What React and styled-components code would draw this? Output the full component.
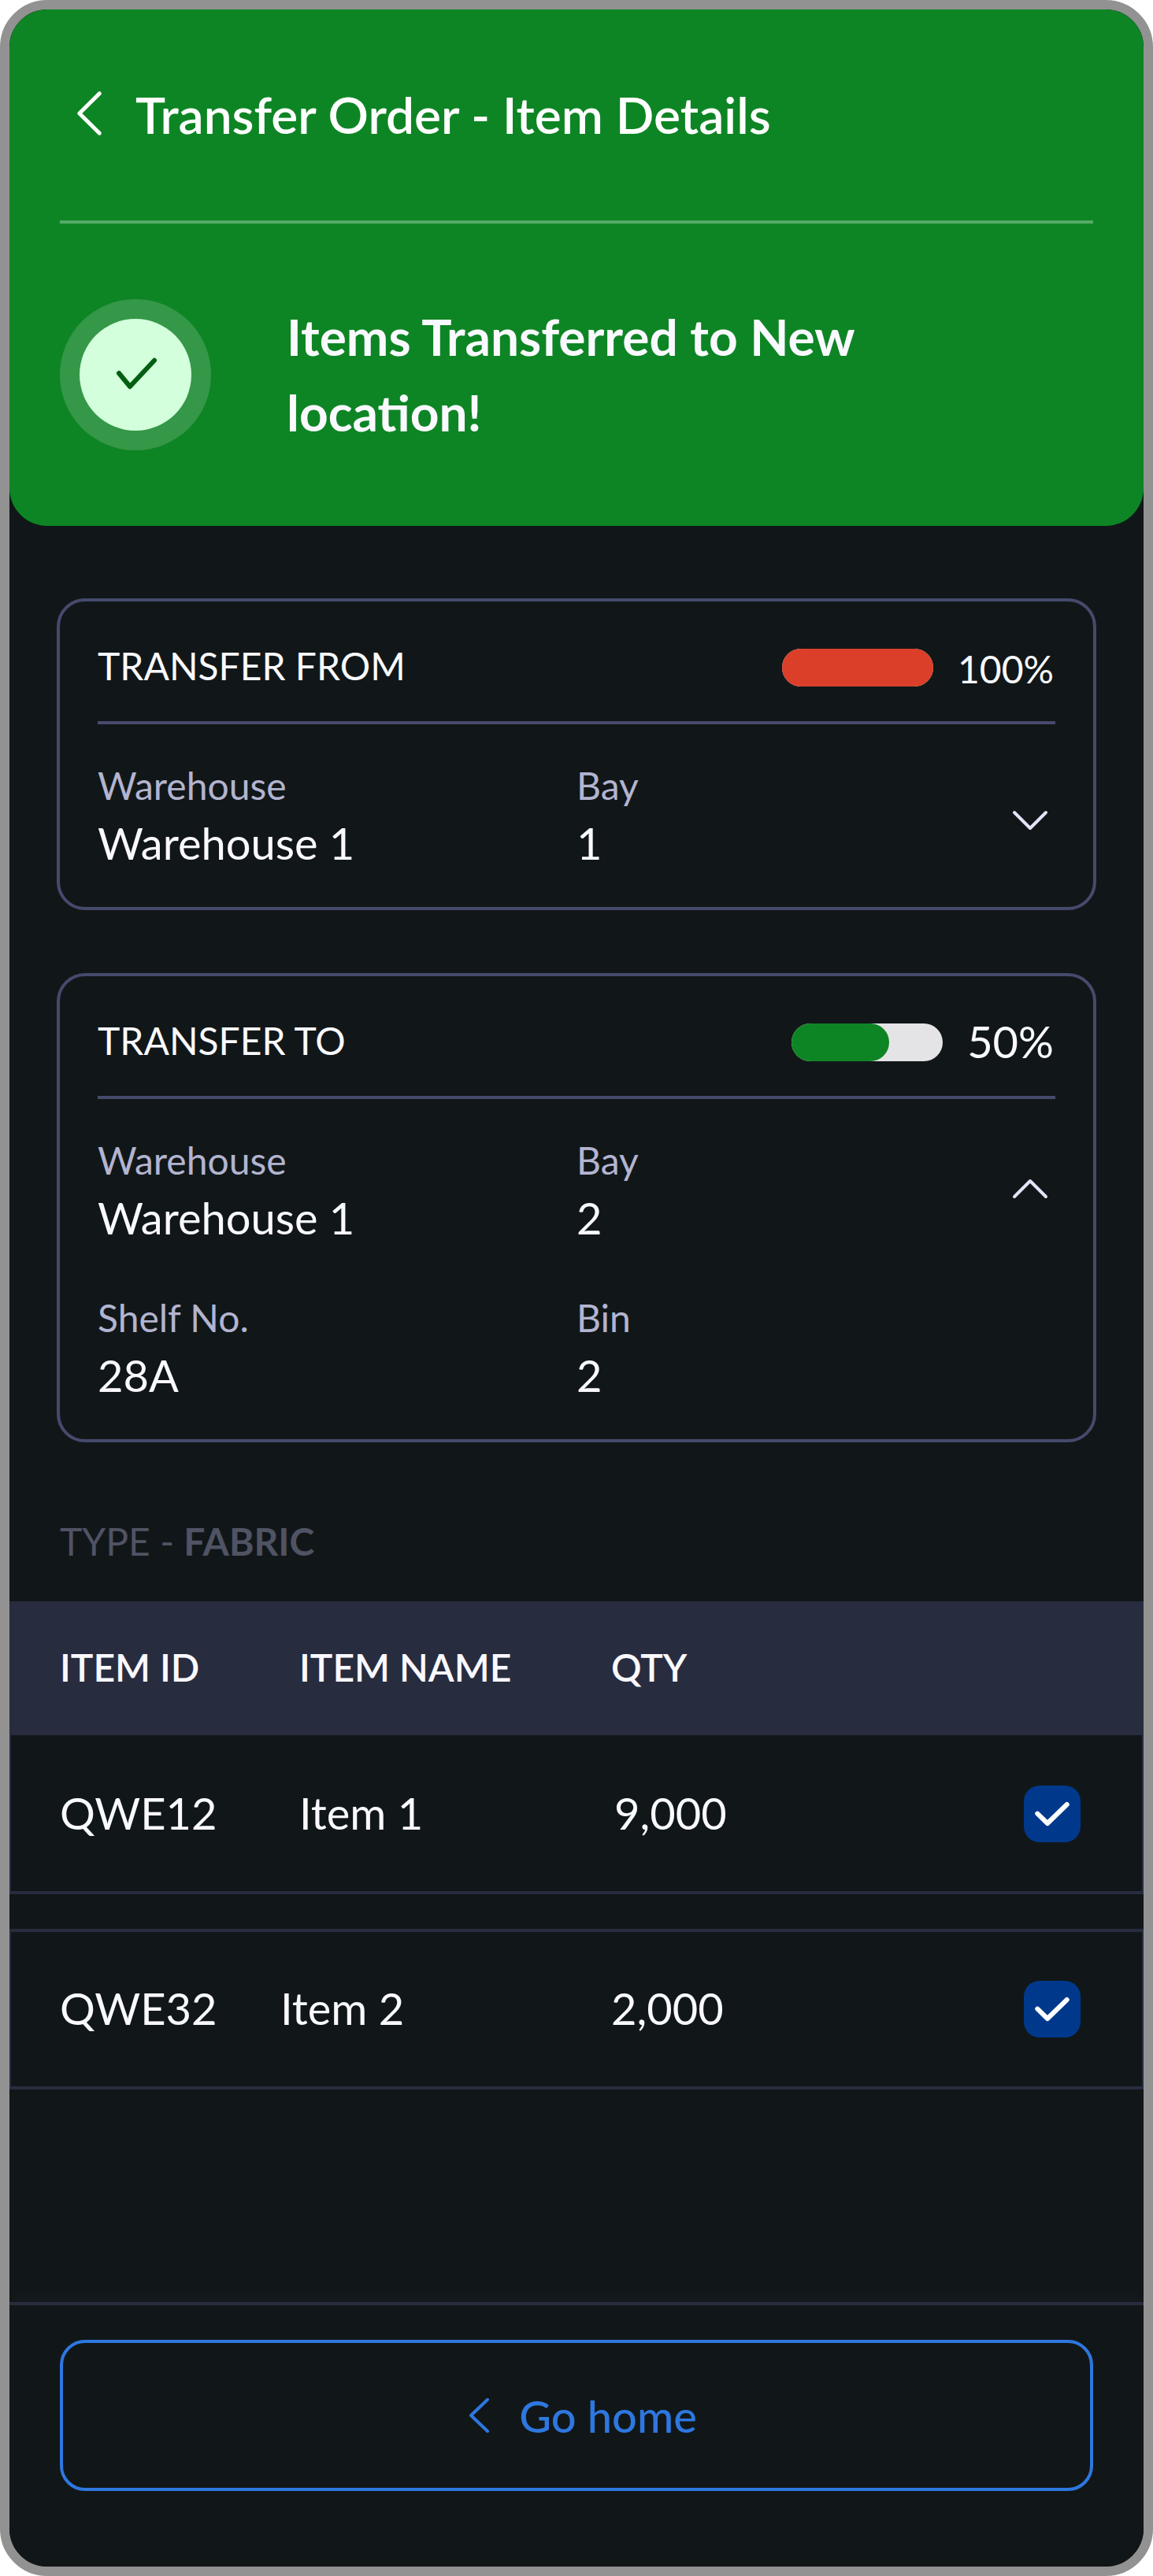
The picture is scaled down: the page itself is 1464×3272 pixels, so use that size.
import React from "react";
import styled, { createGlobalStyle } from "styled-components";

const GlobalStyle = createGlobalStyle`
    * {
        box-sizing: border-box;
    }
    body {
        margin: 0;
        background: #fff;
        font-family: 'Lato', 'Liberation Sans', sans-serif;
    }
    p, h1, h2, h3 {
        margin: 0;
        font-weight: 400;
    }
`;

const Phone = styled.div`
    display: flex;
    flex-direction: column;
    width: 1464px;
    height: 3272px;
    overflow: hidden;
    background: #111718;
    border: 12px solid #929292;
    border-radius: 60px;
    color: #f9f9ff;
`;

const Header = styled.header`
    height: 656px;
    padding: 0 64px;
    background: #0e8524;
    border-radius: 0 0 48px 48px;
`;
const HeaderBar = styled.div`
    display: flex;
    align-items: center;
    height: 272px;
    padding: 0 0 4px 20px;
    border-bottom: 4px solid #56aa66;
`;
const PageTitle = styled.h1`
    margin-left: 42px;
    padding-top: 4px;
    font-size: 64px;
    font-weight: 600;
    line-height: 96px;
    color: #fff;
`;
const Success = styled.div`
    display: flex;
    align-items: center;
    gap: 96px;
    padding-top: 96px;
`;
const SuccessRing = styled.div`
    display: flex;
    align-items: center;
    justify-content: center;
    width: 192px;
    height: 192px;
    border-radius: 50%;
    background: #359748;
`;
const SuccessDot = styled.div`
    display: flex;
    align-items: center;
    justify-content: center;
    width: 142px;
    height: 142px;
    border-radius: 50%;
    background: #d3ffdc;
`;
const SuccessText = styled.h2`
    width: 800px;
    font-size: 64px;
    font-weight: 700;
    line-height: 96px;
`;

const Cards = styled.div`
    display: flex;
    flex-direction: column;
    gap: 80px;
    padding: 92px 60px 0;
`;
const Card = styled.section`
    padding: 44px 48px 0;
    height: ${props => props.$open ? "596px" : "396px"};
    border: 4px solid #454a6d;
    border-radius: 36px;
`;
const CardHead = styled.div`
    display: flex;
    align-items: center;
    height: 112px;
    padding-bottom: 32px;
    border-bottom: 4px solid #454a6d;
`;
const CardTitle = styled.h3`
    flex: 1;
    font-size: 48px;
    line-height: 72px;
`;
const Track = styled.div`
    width: 192px;
    height: 48px;
    margin: 4px 31px 0 0;
    border-radius: 24px;
    background: #e4e4e6;
`;
const Fill = styled.div`
    width: ${props => props.$width}px;
    height: 48px;
    border-radius: 24px;
    background: ${props => props.$color};
`;
const Percent = styled.span`
    margin-right: 2px;
    padding-top: ${props => props.$big ? "1px" : "7px"};
    font-size: ${props => props.$big ? "56px" : "48px"};
    line-height: 72px;
`;
const CardBody = styled.div`
    display: flex;
    justify-content: space-between;
    padding: 42px 8px 0 0;
`;
const Fields = styled.div`
    display: grid;
    grid-template-columns: 608px 400px;
    row-gap: 44px;
`;
const Label = styled.p`
    font-size: 48px;
    line-height: 72px;
    color: #b3b4d0;
`;
const Value = styled.p`
    font-size: 56px;
    line-height: 84px;
    margin-top: -5px;
    margin-bottom: 5px;
`;
const Toggle = styled.div`
    padding-top: ${props => props.$open ? "58px" : "66px"};
`;

const TypeLabel = styled.p`
    margin-top: 90px;
    padding-left: 64px;
    height: 112px;
    font-size: 48px;
    line-height: 72px;
    color: #505364;

    b {
        font-weight: 700;
    }
`;
const TableHead = styled.div`
    display: flex;
    align-items: center;
    height: 170px;
    padding: 0 0 4px 64px;
    background: #282c3f;
    font-size: 48px;
    font-weight: 600;
`;
const Row = styled.div`
    display: flex;
    align-items: center;
    height: ${props => props.$first ? "202px" : "204px"};
    margin-bottom: 44px;
    padding: ${props => props.$first ? "2px" : "0"} 78px 0 62px;
    border: solid #282c3f;
    border-width: ${props => props.$first ? "0 2px 4px" : "4px 2px"};
    font-size: 56px;
`;
const Cell = styled.span`
    width: ${props => props.$width}px;

    ${Row} & {
        padding-bottom: 4px;
    }
`;
const Checkbox = styled.div`
    display: flex;
    align-items: center;
    justify-content: center;
    width: 72px;
    height: 72px;
    margin-left: auto;
    border-radius: 20px;
    background: #00398c;
`;

const Footer = styled.footer`
    margin-top: auto;
    height: 336px;
    padding: 44px 64px 0;
    border-top: 4px solid #282c3f;
    background: #111718;
    box-shadow: 0 -4px 32px rgba(255, 255, 255, 0.04);
`;
const HomeButton = styled.button`
    display: flex;
    align-items: center;
    justify-content: center;
    gap: 37px;
    width: 100%;
    height: 192px;
    padding: 0 0 0 15px;
    border: 4px solid #2e77e0;
    border-radius: 32px;
    background: none;
    color: #2e77e0;
    font-family: inherit;
    font-size: 56px;
    font-weight: 500;
    cursor: pointer;
`;
const Stroke = styled.svg`
    display: block;
    flex: none;
    fill: none;
    stroke: ${props => props.$color};
    stroke-width: ${props => props.$weight};
    stroke-linecap: round;
    stroke-linejoin: round;
`;

const BackIcon = () => (
    <Stroke width="34" height="60" $color="#fff" $weight="5">
        <path d="M30.3 4.7 L4.8 30 L30.3 55.2" />
    </Stroke>
);
const Chevron = ({ open }) => (
    <Stroke width="48" height="28" $color="#e3e3fa" $weight="4">
        <path d={open ? "M4 24 L24 4 L44 24" : "M4 4 L24 24 L44 4"} />
    </Stroke>
);

const cards = [
    {
        title: "TRANSFER FROM",
        percent: "100%",
        width: 192,
        color: "#db3f29",
        fields: [["Warehouse", "Warehouse 1"], ["Bay", "1"]],
    },
    {
        title: "TRANSFER TO",
        percent: "50%",
        width: 124,
        color: "#0e8524",
        open: true,
        fields: [["Warehouse", "Warehouse 1"], ["Bay", "2"], ["Shelf No.", "28A"], ["Bin", "2"]],
    },
];

const items = [
    { id: "QWE12", name: "Item 1", qty: "9,000", widths: [304, 400] },
    { id: "QWE32", name: "Item 2", qty: "2,000", widths: [280, 420] },
];

const TransferCard = ({ title, percent, width, color, open, fields }) => (
    <Card $open={open}>
        <CardHead>
            <CardTitle>{title}</CardTitle>
            <Track>
                <Fill $width={width} $color={color} />
            </Track>
            <Percent $big={open}>{percent}</Percent>
        </CardHead>
        <CardBody>
            <Fields>
                {fields.map(([label, value]) => (
                    <div key={label}>
                        <Label>{label}</Label>
                        <Value>{value}</Value>
                    </div>
                ))}
            </Fields>
            <Toggle $open={open}>
                <Chevron open={open} />
            </Toggle>
        </CardBody>
    </Card>
);

export default function App() {
    return (
        <>
            <GlobalStyle />
            <Phone>
                <Header>
                    <HeaderBar>
                        <BackIcon />
                        <PageTitle>Transfer Order - Item Details</PageTitle>
                    </HeaderBar>
                    <Success>
                        <SuccessRing>
                            <SuccessDot>
                                <Stroke width="56" height="44" $color="#005f12" $weight="6">
                                    <path d="M7 20 L21 37 L52 3.8" />
                                </Stroke>
                            </SuccessDot>
                        </SuccessRing>
                        <SuccessText>Items Transferred to New location!</SuccessText>
                    </Success>
                </Header>
                <Cards>
                    {cards.map(card => <TransferCard key={card.title} {...card} />)}
                </Cards>
                <TypeLabel>TYPE - <b>FABRIC</b></TypeLabel>
                <TableHead>
                    <Cell $width={304}>ITEM ID</Cell>
                    <Cell $width={396}>ITEM NAME</Cell>
                    <Cell $width={200}>QTY</Cell>
                </TableHead>
                {items.map((item, i) => (
                    <Row key={item.id} $first={i === 0}>
                        <Cell $width={item.widths[0]}>{item.id}</Cell>
                        <Cell $width={item.widths[1]}>{item.name}</Cell>
                        <Cell $width={200}>{item.qty}</Cell>
                        <Checkbox>
                            <Stroke width="48" height="34" $color="#fff" $weight="6">
                                <path d="M5.3 16.7 L18 29 L42.7 5" />
                            </Stroke>
                        </Checkbox>
                    </Row>
                ))}
                <Footer>
                    <HomeButton>
                        <Stroke width="28" height="48" $color="#2e77e0" $weight="4">
                            <path d="M25 4 L4 24 L25 44" />
                        </Stroke>
                        Go home
                    </HomeButton>
                </Footer>
            </Phone>
        </>
    );
}
